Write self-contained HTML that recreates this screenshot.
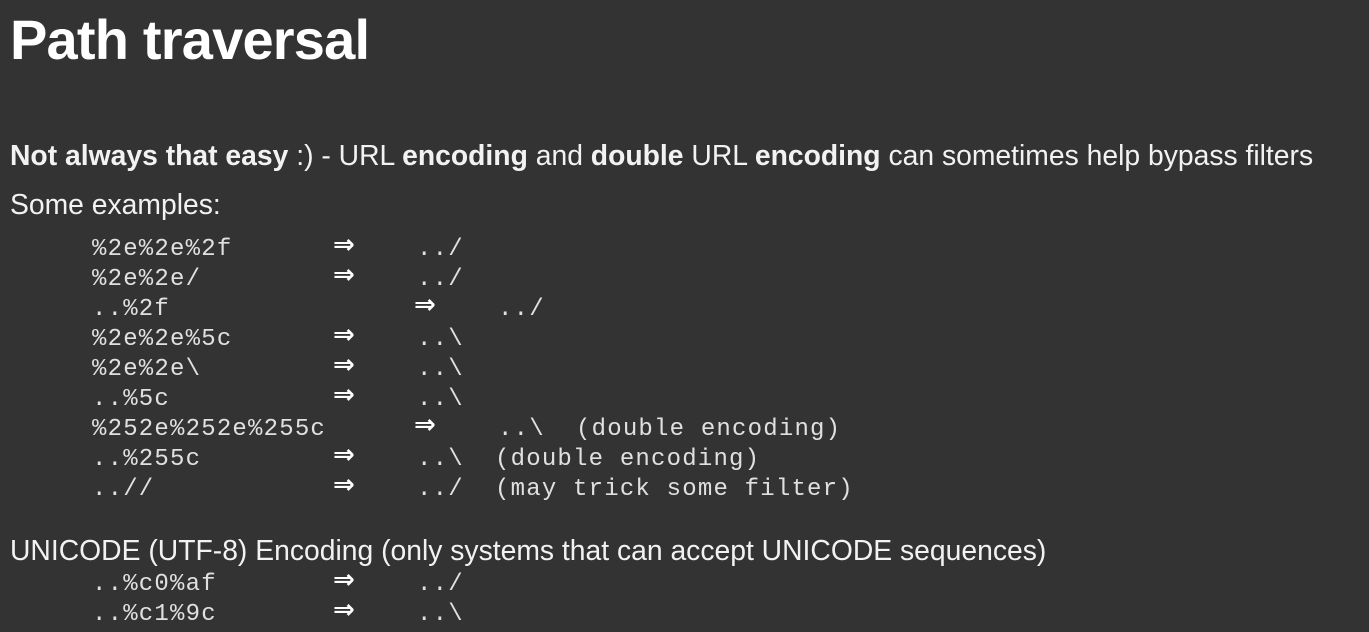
<!DOCTYPE html>
<html><head><meta charset="utf-8"><style>
body{margin:0;width:1369px;height:632px;background:#333333;overflow:hidden;position:relative;color:#f2f2f2;font-family:"Liberation Sans",sans-serif}
.a{position:absolute;white-space:pre;line-height:1}
.t{left:10px;top:12px;font-size:56px;font-weight:bold;letter-spacing:-0.8px;color:#fff}
.p{left:10px;font-size:28.3px;letter-spacing:0}
.m{font-family:"Liberation Mono","Courier New",monospace;font-size:24px;color:#e0e0e0;letter-spacing:1.2px}
.r{font-family:"DejaVu Sans",sans-serif;font-size:26px;color:#fff;font-weight:bold}
</style></head><body>
<div class="a t">Path traversal</div>
<div class="a p" style="top:141px"><b>Not always that easy</b> :) - URL <b>encoding</b> and <b>double</b> URL <b>encoding</b> can sometimes help bypass filters</div>
<div class="a p" style="top:190px">Some examples:</div>

<div class="a m" style="left:92px;top:238px">%2e%2e%2f</div><div class="a r" style="left:333px;top:232px">⇒</div><div class="a m" style="left:417px;top:238px">../</div>
<div class="a m" style="left:92px;top:268px">%2e%2e/</div><div class="a r" style="left:333px;top:262px">⇒</div><div class="a m" style="left:417px;top:268px">../</div>
<div class="a m" style="left:92px;top:298px">..%2f</div><div class="a r" style="left:414px;top:292px">⇒</div><div class="a m" style="left:498px;top:298px">../</div>
<div class="a m" style="left:92px;top:328px">%2e%2e%5c</div><div class="a r" style="left:333px;top:322px">⇒</div><div class="a m" style="left:417px;top:328px">..\</div>
<div class="a m" style="left:92px;top:358px">%2e%2e\</div><div class="a r" style="left:333px;top:352px">⇒</div><div class="a m" style="left:417px;top:358px">..\</div>
<div class="a m" style="left:92px;top:388px">..%5c</div><div class="a r" style="left:333px;top:382px">⇒</div><div class="a m" style="left:417px;top:388px">..\</div>
<div class="a m" style="left:92px;top:418px">%252e%252e%255c</div><div class="a r" style="left:414px;top:412px">⇒</div><div class="a m" style="left:498px;top:418px">..\  (double encoding)</div>
<div class="a m" style="left:92px;top:448px">..%255c</div><div class="a r" style="left:333px;top:442px">⇒</div><div class="a m" style="left:417px;top:448px">..\  (double encoding)</div>
<div class="a m" style="left:92px;top:478px">..//</div><div class="a r" style="left:333px;top:472px">⇒</div><div class="a m" style="left:417px;top:478px">../  (may trick some filter)</div>

<div class="a p" style="top:536px">UNICODE (UTF-8) Encoding (only systems that can accept UNICODE sequences)</div>
<div class="a m" style="left:92px;top:573px">..%c0%af</div><div class="a r" style="left:333px;top:567px">⇒</div><div class="a m" style="left:417px;top:573px">../</div>
<div class="a m" style="left:92px;top:603px">..%c1%9c</div><div class="a r" style="left:333px;top:597px">⇒</div><div class="a m" style="left:417px;top:603px">..\</div>
</body></html>
